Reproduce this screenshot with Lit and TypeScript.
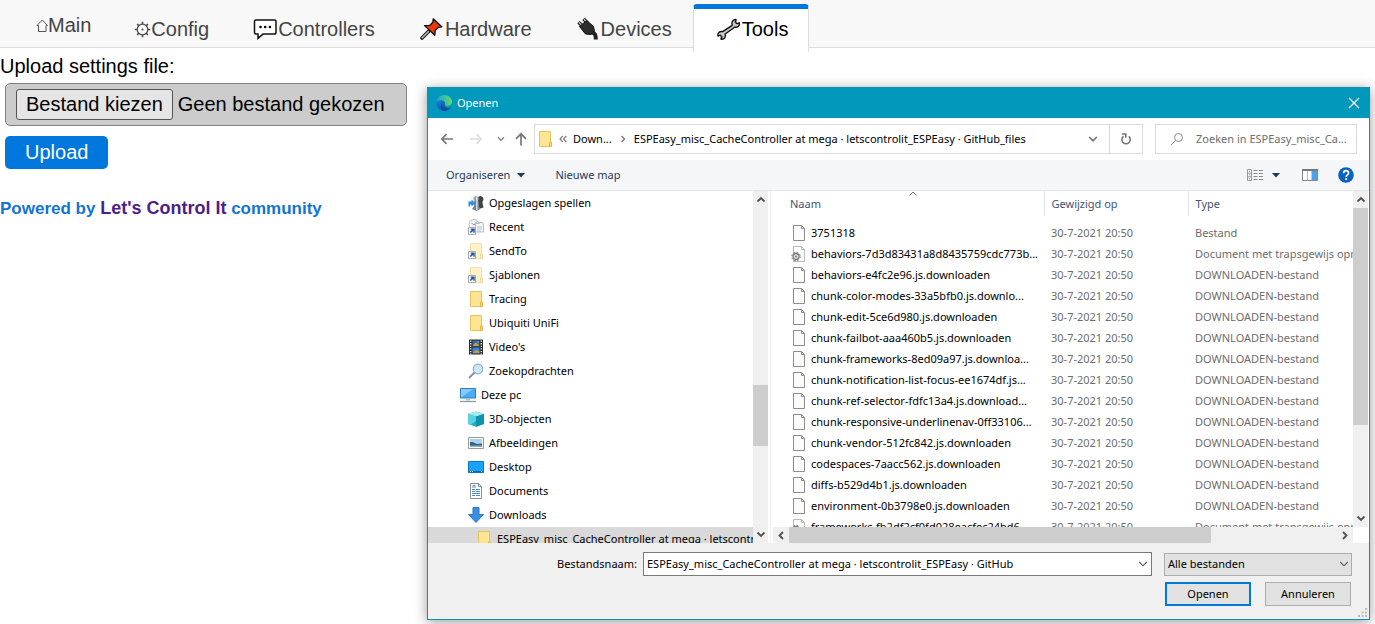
import { LitElement, html, css, svg, TemplateResult } from "lit";
import { customElement } from "lit/decorators.js";
import { classMap } from "lit/directives/class-map.js";

type Glyph = TemplateResult;

const glyph = (w: number, h: number, body: unknown): Glyph =>
  html`<svg width=${w} height=${h} viewBox="0 0 ${w} ${h}" aria-hidden="true">${body}</svg>`;

/* ---------- menu icons ---------- */
const houseIcon = glyph(14, 16, svg`<path d="M3 8.500 8.300 3l5.200 5.500H12v6H4.500v-6z" fill="none" stroke="#555" stroke-width="1"/>`);

const gearIcon = glyph(18, 20, svg`
  <g fill="none" stroke="#4a4a4a">
    <circle cx="9.500" cy="10.500" r="5.300" stroke-width="1.200"/>
    <path d="M9.500 5.200V2.800M9.500 15.800v2.400M4.200 10.500H1.800M14.800 10.500h2.400M5.800 6.800 4.100 5.100M13.200 14.200l1.700 1.700M13.200 6.800l1.700-1.700M5.800 14.200l-1.700 1.700" stroke-width="1.600"/>
  </g>
  <circle cx="9.500" cy="10.500" r="1" fill="#444"/>`);

const chatIcon = glyph(27, 24, svg`
  <path d="M5 2.900h18.500a1.500 1.500 0 0 1 1.500 1.500v11.200a1.500 1.500 0 0 1-1.500 1.500H12l-5 4.200v-4.200H5a1.500 1.500 0 0 1-1.500-1.500V4.400A1.500 1.500 0 0 1 5 2.900z" fill="#fff" stroke="#111" stroke-width="1.500"/>
  <circle cx="9.500" cy="10" r="1.300"/><circle cx="14.200" cy="10" r="1.300"/><circle cx="18.900" cy="10" r="1.300"/>`);

const pinIcon = glyph(28, 24, svg`
  <path d="M11.500 14.500 5 21" stroke="#111" stroke-width="3.600" stroke-linecap="round"/>
  <path d="M11.500 14.500 5.200 20.800" stroke="#bbb" stroke-width="1.600" stroke-linecap="round"/>
  <path d="M16.200 1.800 24.800 9.800 21.500 10.300 18.200 13.400 17.800 18.300 7.500 8.600 12.800 8.300 15.900 5.200z" fill="#e8380d" stroke="#111" stroke-width="1.300" stroke-linejoin="round"/>`);

const plugIcon = glyph(27, 24, svg`
  <path d="M4.500 5.200 8.500 9M9.500 1.800l4 4.200" stroke="#111" stroke-width="3.400"/>
  <path d="M5 5.600 8.500 9M9.900 2.300l3.600 3.700" stroke="#ccc" stroke-width="1.400"/>
  <path d="M5.500 9.500 12.800 3.500 19.500 9.500 20.500 14.500 17 17.500 11.500 17z" fill="#2d2d2d" stroke="#111"/>
  <path d="M17.500 15.500c4 .5 4.300 3 4.300 7" fill="none" stroke="#222" stroke-width="4"/>`);

const wrenchIcon = glyph(28, 24, svg`
  <path d="M18.200 8.300c-1-2.800.3-5.400 3-5.800l1 .3-.8 2.400 1.600 1.400 2.300-.8c.9 2.500-1.600 5-4.700 4.400L11.200 17c.8 2.600-.6 5-3.300 5.300l-1-.3.900-2.300-1.500-1.500-2.300.9c-.9-2.700 1.500-5.100 4.700-4.500z" fill="#c8c8c8" stroke="#111" stroke-width="1.400" stroke-linejoin="round"/>`);

/* ---------- dialog icons ---------- */
const edgeIcon = glyph(16, 16, svg`
  <defs>
    <linearGradient id="sea" x1="0" y1="0" x2="1" y2="0"><stop offset="0" stop-color="#1fa0dc"/><stop offset="1" stop-color="#5fdc64"/></linearGradient>
    <linearGradient id="deep" x1="0" y1="0" x2="1" y2="1"><stop offset="0" stop-color="#1a86dc"/><stop offset="1" stop-color="#0b3f8c"/></linearGradient>
  </defs>
  <path d="M.2 6.500C1.200 2.500 4.500 0 8 0c4.800 0 8 3.400 8 6.800 0 2.700-2 4-4.300 4-1.900 0-2.900-.7-2.400-1.500l-2-3z" fill="url(#sea)"/>
  <path d="M.2 6.500C2 4.800 6 4.700 8 6.200c1 .8 1.300 2 1 2.800-1.200 1.500 1 4.200 3 4 1.500-.1 2.200-.5 2.800-.5C13.300 14.700 10.800 16 8 16 3.500 16-.6 12 .2 6.500z" fill="url(#deep)"/>
  <path d="M6.300 7.500c-1.400 3 .8 6.500 4.700 6.300 1.700-.1 3.200-1 3.800-1.500-1.500 2.400-4 3.700-6.800 3.700C5 14.500 4.300 10 6.300 7.500z" fill="#0c4a9e"/>`);

const closeIcon = glyph(12, 12, svg`<path d="M1 1l10 10M11 1 1 11" stroke="#fff" stroke-width="1.200"/>`);
const backIcon = glyph(14, 14, svg`<path d="M13 7H2M6.500 2.200 1.800 7l4.700 4.800" fill="none" stroke="#777" stroke-width="1.700"/>`);
const forwardIcon = glyph(14, 14, svg`<path d="M1 7h11M7.500 2.200 12.200 7l-4.700 4.800" fill="none" stroke="#ddd" stroke-width="1.700"/>`);
const upIcon = glyph(14, 14, svg`<path d="M7 13.500V2M2 6.800 7 1.800l5 5" fill="none" stroke="#777" stroke-width="1.700"/>`);
const chevron = (color: string, weight: number) =>
  glyph(10, 8, svg`<path d="M1.200 2 5 5.800 8.800 2" fill="none" stroke=${color} stroke-width=${weight}/>`);
const smallChevron = glyph(8, 6, svg`<path d="M1 1.200 4 4.200l3-3" fill="none" stroke="#888" stroke-width="1.500"/>`);
const doubleLeft = glyph(8, 8, svg`<path d="M3.800 1 1 4l2.800 3M7.300 1 4.500 4l2.800 3" fill="none" stroke="#777" stroke-width="1.100"/>`);
const crumbIcon = glyph(6, 8, svg`<path d="M1.500 1 4.500 4l-3 3" fill="none" stroke="#777" stroke-width="1.400"/>`);
const refreshIcon = glyph(12, 14, svg`
  <path d="M8.800 4.400A4.200 4.200 0 1 1 3.500 4.300" fill="none" stroke="#777" stroke-width="1.600"/>
  <path d="M2 2h3.800v3.800" fill="none" stroke="#777" stroke-width="1.600"/>`);
const searchIcon = glyph(14, 14, svg`<circle cx="8.500" cy="5.500" r="4" fill="none" stroke="#888"/><path d="M5.600 8.400 1 13" stroke="#888"/>`);
const caret = glyph(8, 5, svg`<path d="M0 0h8L4 4.500z" fill="#1e395b"/>`);
const viewIcon = glyph(16, 14, svg`
  <path d="M.5 1.500h4v11h-4zM.5 5.200h4M.5 8.800h4" fill="none" stroke="#999"/>
  <path d="M2 3.200h1M2 7h1M2 10.700h1" stroke="#6a93c0"/>
  <path d="M6.500 2.500h4m1.500 0h4M6.500 5.500h4m1.500 0h4M6.500 8.500h4m1.500 0h4M6.500 11.500h4m1.500 0h4" stroke="#888"/>`);
const paneIcon = glyph(16, 12, svg`
  <path d="M.5.500h15v11H.5z" fill="#fff" stroke="#888"/><path d="M0 1h16" stroke="#777" stroke-width="2"/>
  <path d="M5.500 2v9.500" stroke="#bbb"/><path d="M9.500 2H15v9H9.500z" fill="#4da3e6"/>`);
const helpIcon = html`<svg width="16" height="16" viewBox="0 0 16 16" aria-hidden="true">
  <circle cx="8" cy="8" r="7.800" fill="#0a62c0"/>
  <path d="M5.600 6.200c0-3.400 5-3.200 5-.3 0 2-2.400 1.900-2.400 4" fill="none" stroke="#fff" stroke-width="1.700"/>
  <circle cx="8.200" cy="12" r="1.100" fill="#fff"/></svg>`;
const sortIcon = html`<svg class="sort" width="10" height="5" viewBox="0 0 10 5" aria-hidden="true"><path d="M1.500 4.500 5 1l3.500 3.500" fill="none" stroke="#777"/></svg>`;
const gripIcon = glyph(10, 10, svg`<path d="M7 0h2v2H7zM7 3.500h2v2H7zM3.500 3.500h2v2h-2zM0 7h2v2H0zM3.500 7h2v2h-2zM7 7h2v2H7z" fill="#bbb"/>`);

/* ---------- folder tree icons ---------- */
const folderBody = svg`
  <path d="M2.500.5h11v10.500l1 .5v4h-12z" fill="#ffe493" stroke="#e8c35c"/>
  <path d="M12.500 15.500v-4.500h2v4.500z" fill="#ffd96b" stroke="#e0b84e"/>`;
const linkBadge = svg`<path d="M.5 8.500h7v7h-7z" fill="#fff" stroke="#a8a8a8"/><path d="M2.300 14v-1.500l2-2H2.800V9.800h3.700v3.600h-1v-1.800z" fill="#1b4f9c" stroke="#1b4f9c" stroke-width=".4"/>`;

const icons: Record<string, Glyph> = {
  folder: glyph(16, 16, folderBody),
  linked: glyph(16, 16, svg`<g opacity=".5">${folderBody}</g>${linkBadge}`),
  games: glyph(16, 16, svg`
    <path d="M10 2.500a3 3 0 0 1 5.500 1.500c0 2-1.500 2.600-1 4l1 4.500-5 1.500z" fill="#444"/>
    <circle cx="8" cy="3.500" r="2.600" fill="#9aa6ae"/><path d="M6.300 5.500h3.600l.6 5 2 3.500-4 2-4.500-2 2-3z" fill="#76848d"/>
    <path d="M8.800 1.500v13.500" stroke="#d9e0e4" stroke-width="1.400"/>
    <path d="M.5 6.500h3V4.500l4 3.500-4 3.500V9.800H2v1.700H.5z" fill="#2a8fdc"/>`),
  recent: glyph(16, 16, svg`
    <circle cx="6" cy="5.500" r="5" fill="#f3f5f6" stroke="#b7bcc0"/><path d="M3.500 4 6 6l3-3.500" fill="none" stroke="#8e979d"/>
    <path d="M7.500 4.500h4v-1h3l1 1.500v8h-8z" fill="#fafafa" stroke="#bbb"/><path d="M9 8h5M9 10h5M9 12h4" stroke="#a9c0d8"/>${linkBadge}`),
  video: glyph(16, 16, svg`
    <path d="M1 .5h14v15H1z" fill="#2b2b2b"/><path d="M4.500 1.500h7v6h-7z" fill="#3567b5"/><path d="M4.500 8.500h7v6h-7z" fill="#3c83d8"/>
    <path d="M5 6 8 3.500 11 6v1H5zM5 13l3.500-2 3 1.500V14H5z" fill="#c59a3c"/><path d="M9 2h2v2H9z" fill="#4aa35c"/>
    <path d="M2.700 1.500v14M13.300 1.500v14" stroke="#f4f4f4" stroke-width="1.400" stroke-dasharray="1.300 1.300"/>`),
  lens: glyph(16, 16, svg`
    <path d="M6.500 9.500 1.500 14.500" stroke="#8795a0" stroke-width="2" stroke-linecap="round"/>
    <circle cx="10" cy="6" r="4.800" fill="#c9eafa" stroke="#8fb2c9" stroke-width="1.200"/>`),
  pc: glyph(16, 16, svg`
    <path d="M.5 1.500h15v9.500H.5z" fill="#49aef2" stroke="#2d7fb8"/><path d="M1 10.500V2h12z" fill="#85cbfa"/>
    <path d="M6 11.500h4v2H6z" fill="#b5c2cb"/><path d="M0 14.500h16" stroke="#8b99a6" stroke-width="1.300"/>`),
  cube: glyph(16, 16, svg`
    <path d="M8 .5 16 3v10l-8 2.800L0 13V3z" fill="#21aec4"/><path d="M8 .5 16 3 8 5.500 0 3z" fill="#a2ecf4"/>
    <path d="M8 5.500 16 3v10l-8 2.800z" fill="#0d93ad"/><path d="M0 3l8 2.500V10L2.500 13.800 0 13z" fill="#59d3df"/>`),
  picture: glyph(16, 16, svg`
    <path d="M.5 2.500h15v11H.5z" fill="#fff" stroke="#9a9a9a"/><path d="M2 4h12v8H2z" fill="#a9d3f2"/>
    <path d="M2 7.500c3-1.500 4 1 7 1.500l5-.5V12H2z" fill="#37607a"/><path d="M2 10.500h12V12H2z" fill="#8fb0c0"/>`),
  desktop: glyph(16, 16, svg`
    <path d="M.5 2.500h15v11H.5z" fill="#18a4fb" stroke="#0b77c7"/><path d="M1 12.500h14" stroke="#0a64ae"/><path d="M2 12.500h1m1 0h1m8 0h1" stroke="#fff"/>`),
  document: glyph(16, 16, svg`
    <path d="M2.500.5h8l3 3v12h-11z" fill="#fff" stroke="#8f8f8f"/><path d="M10.500.5v3h3" fill="none" stroke="#8f8f8f"/>
    <path d="M4 6.500h3m1 0h4M4 8.500h3m1 0h4M4 10.500h8M4 12.500h3m1 0h4" stroke="#4b8fd0"/><path d="M5 5V2.500h2V5" fill="none" stroke="#4b8fd0"/>`),
  download: glyph(16, 16, svg`<path d="M5 .5h6v7h4.500L8 15.500.5 7.500H5z" fill="#3a8fe0" stroke="#2c74bd"/>`),
};

const fileBody = svg`<path d="M.5.500h8l3 3v12H.5z" fill="#fcfcfc" stroke="#8c8c8c"/><path d="M8.500.500v3h3" fill="none" stroke="#8c8c8c"/>`;
const fileIcon = html`<svg class="file" width="14" height="16" viewBox="-2 0 14 16" aria-hidden="true">${fileBody}</svg>`;
const cssIcon = html`<svg class="file" width="14" height="16" viewBox="-2 0 14 16" aria-hidden="true"><g opacity=".6">${fileBody}</g>
  <circle cx="3" cy="10.500" r="3" fill="#e6e6e6" stroke="#777" stroke-width="1.300"/><circle cx="3" cy="10.500" r="4.300" fill="none" stroke="#777" stroke-dasharray="1.700 1.680"/><circle cx="3" cy="10.500" r="1" fill="#777"/></svg>`;

/* ---------- data ---------- */
const FOLDER = "ESPEasy_misc_CacheController at mega · letscontrolit_ESPEasy · GitHub_files";

const tabs: { label: string; icon: Glyph; kind?: string }[] = [
  { label: "Main", icon: houseIcon, kind: "first" },
  { label: "Config", icon: gearIcon },
  { label: "Controllers", icon: chatIcon },
  { label: "Hardware", icon: pinIcon },
  { label: "Devices", icon: plugIcon },
  { label: "Tools", icon: wrenchIcon, kind: "active" },
];

const tree: { icon: string; label: string; level: number; selected?: boolean }[] = [
  { icon: "games", label: "Opgeslagen spellen", level: 2 },
  { icon: "recent", label: "Recent", level: 2 },
  { icon: "linked", label: "SendTo", level: 2 },
  { icon: "linked", label: "Sjablonen", level: 2 },
  { icon: "folder", label: "Tracing", level: 2 },
  { icon: "folder", label: "Ubiquiti UniFi", level: 2 },
  { icon: "video", label: "Video's", level: 2 },
  { icon: "lens", label: "Zoekopdrachten", level: 2 },
  { icon: "pc", label: "Deze pc", level: 1 },
  { icon: "cube", label: "3D-objecten", level: 2 },
  { icon: "picture", label: "Afbeeldingen", level: 2 },
  { icon: "desktop", label: "Desktop", level: 2 },
  { icon: "document", label: "Documents", level: 2 },
  { icon: "download", label: "Downloads", level: 2 },
  { icon: "folder", label: FOLDER, level: 3, selected: true },
];

const DL = "DOWNLOADEN-bestand";
const CSS_DOC = "Document met trapsgewijs opmaakmodel";
const files: [string, string][] = [
  ["3751318", "Bestand"],
  ["behaviors-7d3d83431a8d8435759cdc773b...", CSS_DOC],
  ["behaviors-e4fc2e96.js.downloaden", DL],
  ["chunk-color-modes-33a5bfb0.js.downlo...", DL],
  ["chunk-edit-5ce6d980.js.downloaden", DL],
  ["chunk-failbot-aaa460b5.js.downloaden", DL],
  ["chunk-frameworks-8ed09a97.js.downloa...", DL],
  ["chunk-notification-list-focus-ee1674df.js...", DL],
  ["chunk-ref-selector-fdfc13a4.js.download...", DL],
  ["chunk-responsive-underlinenav-0ff33106...", DL],
  ["chunk-vendor-512fc842.js.downloaden", DL],
  ["codespaces-7aacc562.js.downloaden", DL],
  ["diffs-b529d4b1.js.downloaden", DL],
  ["environment-0b3798e0.js.downloaden", DL],
  ["frameworks-fb2df2cf0fd028eacfec24bd6...", CSS_DOC],
];

const arrows: Record<string, string> = {
  up: "M4.500 10 8 6.500l3.500 3.500",
  down: "M4.500 6 8 9.500 11.500 6",
  left: "M10 4.500 6.500 8l3.500 3.500",
  right: "M6 4.500 9.500 8 6 11.500",
};

@customElement("scroll-bar")
class ScrollBar extends LitElement {
  static properties = { horizontal: { type: Boolean, reflect: true }, before: { type: Number }, size: { type: Number } };
  declare horizontal: boolean;
  declare before: number;
  declare size: number;

  static styles = css`
    :host { display: flex; flex-direction: column; flex: none; width: 15px; background: #f0f0f0; }
    :host([horizontal]) { flex-direction: row; width: auto; height: 16px; }
    .arrow { flex: none; width: 16px; height: 17px; }
    .track { flex: 1; display: flex; flex-direction: inherit; min-width: 0; min-height: 0; }
    .thumb { background: #cdcdcd; }
  `;

  private arrow(name: string) {
    return html`<svg class="arrow" viewBox="0 0 16 16" aria-hidden="true">
      <path d=${arrows[name]} fill="none" stroke="#505050" stroke-width="1.800"/></svg>`;
  }

  render() {
    const h = this.horizontal;
    return html`${this.arrow(h ? "left" : "up")}
      <div class="track">
        <div style="flex: 0 0 ${this.before}%"></div>
        <div class="thumb" style="flex: 0 0 ${this.size}%"></div>
      </div>
      ${this.arrow(h ? "right" : "down")}`;
  }
}

@customElement("open-dialog")
class OpenDialog extends LitElement {
  static styles = css`
    :host {
      display: flex; flex-direction: column; box-sizing: border-box;
      border: 1px solid #1390ae; background: #fff; color: #000;
      box-shadow: 0 2px 12px rgba(0, 0, 0, 0.4);
      font: 11px/16px "Noto Sans", "Open Sans", sans-serif;
    }
    svg { display: block; flex: none; }
    button, input, select { font: inherit; color: inherit; margin: 0; padding: 0; border: 0; background: none; border-radius: 0; }
    .title { display: flex; align-items: center; height: 30px; padding: 0 9px 0 8px; gap: 5px; background: #0099bc; color: #fff; }
    .title .name { flex: 1; }
    .nav { display: flex; align-items: center; height: 41px; padding: 0 12px 0 12px; box-sizing: border-box; margin-bottom: 1px; }
    .history { display: flex; align-items: center; gap: 15px; width: 94px; }
    .history .recent { display: flex; gap: 9px; align-items: center; margin-left: -1px; }
    .address { flex: 1; min-width: 0; display: flex; height: 30px; box-sizing: border-box; border: 1px solid #d9d9d9; }
    .crumbs { flex: 1; min-width: 0; display: flex; align-items: center; padding-left: 2px; white-space: nowrap; overflow: hidden; gap: 6px; }
    .crumbs .path { display: flex; align-items: center; gap: 8px; }
    .drop { width: 32px; display: grid; place-items: center; }
    .reload { width: 33px; display: grid; place-items: center; border-left: 1px solid #d9d9d9; }
    .search { display: flex; align-items: center; gap: 12px; width: 202px; height: 30px; box-sizing: border-box; margin-left: 12px; padding: 0 4px 0 14px; border: 1px solid #d9d9d9; }
    .search input { flex: 1; min-width: 0; outline: 0; }
    .search input::placeholder { color: #6d6d6d; opacity: 1; }
    .tools { display: flex; align-items: center; height: 31px; box-sizing: border-box; padding: 0 15px 0 18px; background: #f5f6f7; border-bottom: 1px solid #e3e6ea; color: #1e395b; }
    .tools button { display: flex; align-items: center; gap: 7px; }
    .tools .new { margin-left: 30px; }
    .tools .views { margin-left: auto; gap: 9px; }
    .tools .preview { margin: 0 20px 0 22px; }
    .panes { flex: 1; min-height: 0; display: flex; }
    .tree { width: 340px; flex: none; display: flex; border-right: 1px solid #f0f0f0; padding-right: 2px; }
    .nodes { flex: 1; min-width: 0; overflow: hidden; margin: 0; padding: 0; list-style: none; }
    .node { display: flex; align-items: center; gap: 5px; height: 24px; white-space: nowrap; }
    .level1 { padding-left: 32px; }
    .level2 { padding-left: 40px; }
    .level3 { padding-left: 48px; }
    .selected { background: #d9d9d9; }
    .list { flex: 1; min-width: 0; display: flex; flex-direction: column; padding: 0 1px 0 2px; }
    .upper { flex: 1; min-height: 0; display: flex; }
    .files { flex: 1; min-width: 0; overflow: hidden; }
    table { table-layout: fixed; width: 100%; border-collapse: collapse; }
    .c-name { width: 271px; }
    .c-date { width: 144px; }
    th { height: 25px; padding: 0 0 0 7px; text-align: left; font-weight: 400; color: #44546f; border-right: 1px solid #e2e5e9; position: relative; }
    th:first-child { padding-left: 17px; }
    th:last-child { border-right: 0; }
    .sort { position: absolute; top: 0; left: 50%; }
    tbody::before { content: ""; display: block; height: 6px; }
    td { height: 21px; padding: 0 0 0 7px; white-space: nowrap; color: #6d6d6d; }
    td:first-child { padding-left: 18px; color: #000; }
    .entry { display: flex; align-items: center; gap: 6px; }
    .across { display: flex; background: #fff; padding-right: 15px; }
    .across scroll-bar { flex: 1; min-width: 0; }
    .foot { display: grid; grid-template-columns: 209px 1fr 188px; column-gap: 6px; row-gap: 6px; padding: 9px 17px 13px 0; background: #f0f0f0; position: relative; align-items: center; }
    .foot label { text-align: right; }
    .combo { display: flex; align-items: center; height: 24px; box-sizing: border-box; margin-right: 6px; border: 1px solid #7a7a7a; background: #fff; padding: 0 3px; }
    .combo input { flex: 1; min-width: 0; outline: 0; }
    .pick { display: grid; align-items: center; }
    .pick select { grid-area: 1 / 1; appearance: none; height: 23px; padding-left: 3px; border: 1px solid #adadad; background: #e1e1e1; }
    .pick svg { grid-area: 1 / 1; justify-self: end; margin-right: 3px; pointer-events: none; }
    .actions { grid-column: 3; display: flex; justify-content: space-between; padding: 0 1px; }
    .actions button { width: 86px; height: 24px; border: 1px solid #adadad; background: #e1e1e1; }
    .actions .primary { border: 2px solid #0078d7; }
    .grip { position: absolute; right: 1px; bottom: 1px; }
  `;

  render() {
    return html`
      <div class="title">${edgeIcon}<span class="name">Openen</span><button aria-label="Sluiten">${closeIcon}</button></div>
      <div class="nav">
        <div class="history">
          <button aria-label="Terug">${backIcon}</button>
          <button aria-label="Vooruit">${forwardIcon}</button>
          <div class="recent">
            <button aria-label="Recente locaties">${smallChevron}</button>
            <button aria-label="Omhoog">${upIcon}</button>
          </div>
        </div>
        <div class="address">
          <div class="crumbs">
            ${icons.folder}${doubleLeft}
            <span class="path"><span>Down...</span>${crumbIcon}<span>${FOLDER}</span></span>
          </div>
          <button class="drop" aria-label="Vorige locaties">${chevron("#777", 1.7)}</button>
          <button class="reload" aria-label="Vernieuwen">${refreshIcon}</button>
        </div>
        <div class="search">${searchIcon}<input type="text" aria-label="Zoeken" placeholder="Zoeken in ESPEasy_misc_Ca..." /></div>
      </div>
      <div class="tools">
        <button>Organiseren ${caret}</button>
        <button class="new">Nieuwe map</button>
        <button class="views" aria-label="Weergave">${viewIcon}${caret}</button>
        <button class="preview" aria-label="Voorbeeldvenster">${paneIcon}</button>
        <button aria-label="Help">${helpIcon}</button>
      </div>
      <div class="panes">
        <div class="tree">
          <ul class="nodes">
            ${tree.map(
              (n) => html`<li class=${classMap({ node: true, [`level${n.level}`]: true, selected: !!n.selected })}>
                ${icons[n.icon]}<span>${n.label}</span>
              </li>`
            )}
          </ul>
          <scroll-bar .before=${55.8} .size=${19}></scroll-bar>
        </div>
        <div class="list">
          <div class="upper">
            <div class="files">
              <table>
                <colgroup><col class="c-name" /><col class="c-date" /><col /></colgroup>
                <thead>
                  <tr><th aria-sort="ascending">Naam${sortIcon}</th><th>Gewijzigd op</th><th>Type</th></tr>
                </thead>
                <tbody>
                  ${files.map(
                    ([name, type]) => html`<tr>
                      <td><span class="entry">${type === CSS_DOC ? cssIcon : fileIcon}<span>${name}</span></span></td>
                      <td>30-7-2021 20:50</td>
                      <td>${type}</td>
                    </tr>`
                  )}
                </tbody>
              </table>
            </div>
            <scroll-bar .before=${0} .size=${72}></scroll-bar>
          </div>
          <div class="across"><scroll-bar horizontal .before=${0} .size=${77}></scroll-bar></div>
        </div>
      </div>
      <div class="foot">
        <label for="filename">Bestandsnaam:</label>
        <div class="combo">
          <input id="filename" type="text" .value=${FOLDER.replace("_files", "")} />
          <button aria-label="Eerdere namen">${chevron("#555", 1.1)}</button>
        </div>
        <div class="pick">
          <select aria-label="Bestandstype"><option>Alle bestanden</option></select>
          ${chevron("#555", 1.1)}
        </div>
        <div class="actions"><button class="primary">Openen</button><button>Annuleren</button></div>
        <span class="grip">${gripIcon}</span>
      </div>
    `;
  }
}

@customElement("app-root")
class AppRoot extends LitElement {
  static styles = css`
    :host {
      display: block; position: relative; min-height: 100vh; overflow: hidden;
      background: #fff; color: #000;
      font: 20px/24px "Liberation Sans", Arial, sans-serif;
    }
    .menu { display: flex; height: 48px; padding: 4px 0 0 13px; box-sizing: border-box; background: #f8f8f8; box-shadow: inset 0 -1px 0 #ddd; }
    .tab { display: flex; align-items: center; box-sizing: border-box; height: 48px; padding: 0 20px 4px; color: #444; text-decoration: none; white-space: nowrap; border: 1px solid transparent; border-top-width: 5px; border-bottom: 0; border-radius: 4px 4px 0 0; }
    .tab.first { height: 40px; }
    .tab.active { color: #000; background: #fff; border-color: #07d #ddd; }
    .tab svg { display: block; }
    .upload { display: flex; flex-direction: column; align-items: flex-start; padding-top: 6px; }
    .picker { display: flex; align-items: center; gap: 5px; width: 402px; max-width: 100%; height: 43px; box-sizing: border-box; margin: 5px 5px 10px; padding: 0 10px; border: 1px solid #808080; border-radius: 5px; background: #ccc; }
    .picker input { position: absolute; width: 1px; height: 1px; opacity: 0; }
    .picker span { padding-bottom: 1px; }
    .picker .choose { padding: 2px 9px 3px; border: 1px solid #555; border-radius: 3px; background: #e5e5e5; }
    .send { margin: 0 5px; padding: 4px 20px 5px; border: 0; border-radius: 5px; background: #07d; color: #fff; font: inherit; }
    .credit { margin: 27px 0 0; font-size: 17px; font-weight: 700; color: #1374d2; }
    .credit a { font-size: 18px; color: #4f1d88; text-decoration: none; }
    open-dialog { position: absolute; top: 87px; right: 5px; bottom: 4px; left: 427px; }
  `;

  render() {
    return html`
      <nav class="menu">
        ${tabs.map(
          (t) => html`<a href="#" class=${classMap({ tab: true, first: t.kind === "first", active: t.kind === "active" })}>${t.icon}<span>${t.label}</span></a>`
        )}
      </nav>
      <form class="upload">
        <span>Upload settings file:</span>
        <label class="picker">
          <input type="file" />
          <span class="choose">Bestand kiezen</span><span>Geen bestand gekozen</span>
        </label>
        <button class="send" type="button">Upload</button>
      </form>
      <p class="credit">Powered by <a href="#">Let's Control It</a> community</p>
      <open-dialog role="dialog" aria-label="Openen"></open-dialog>
    `;
  }
}
